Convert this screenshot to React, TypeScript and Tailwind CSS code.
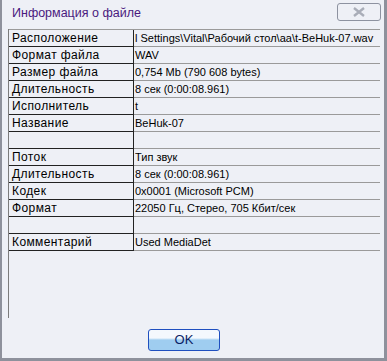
import React from "react";

type Row = { k: string; v: string };

const rows: Row[] = [
  { k: "Расположение", v: "l Settings\\Vital\\Рабочий стол\\aa\\t-BeHuk-07.wav" },
  { k: "Формат файла", v: "WAV" },
  { k: "Размер файла", v: "0,754 Mb (790 608 bytes)" },
  { k: "Длительность", v: "8 сек (0:00:08.961)" },
  { k: "Исполнитель", v: "t" },
  { k: "Название", v: "BeHuk-07" },
  { k: "", v: "" },
  { k: "Поток", v: "Тип звук" },
  { k: "Длительность", v: "8 сек (0:00:08.961)" },
  { k: "Кодек", v: "0x0001 (Microsoft PCM)" },
  { k: "Формат", v: "22050 Гц, Стерео, 705 Кбит/сек" },
  { k: "", v: "" },
  { k: "Комментарий", v: "Used MediaDet" },
];

const App = () => {
  return (
    <div
      className="relative w-[387px] h-[361px] bg-[#eef0f6] border-l-2 border-r-[3px] border-b-[3px] border-[#8e919c] overflow-hidden"
      style={{ fontFamily: '"Liberation Sans", Arial, sans-serif' }}
    >
      {/* title */}
      <div className="h-[25px] pl-[10px] pt-[5px] text-[12.5px] leading-[16px] text-[#4a1a7e]">
        Информация о файле
      </div>
      <div className="absolute right-[3px] top-[3px] w-[44px] h-[18px] border border-[#8d92a0] rounded-[3px] flex items-center justify-center">
        <svg width="14" height="10" viewBox="0 0 14 10">
          <path d="M2 1 L12 9 M12 1 L2 9" stroke="#a9adb8" strokeWidth="2.4" fill="none" />
        </svg>
      </div>

      {/* table area */}
      <div className="ml-[6px] mt-[4px] h-[289px] w-[372px] border-l border-[#7c7c7c]">
        <div className="border-t border-[#9a9a9a]">
          {rows.map((r, i) => (
            <div key={i} className="flex h-[17px] leading-[16px] text-black">
              <div className="w-[125px] border-r border-b border-[#222] pl-[3px] overflow-hidden whitespace-nowrap text-[12px] tracking-[0.4px]">
                {r.k}
              </div>
              <div className="flex-1 border-b border-[#9a9a9a] pl-[1px] overflow-hidden whitespace-nowrap text-[11px]">
                {r.v}
              </div>
            </div>
          ))}
        </div>
      </div>

      {/* button */}
      <div className="mt-[11px] ml-[146px] w-[72px] h-[22px] rounded-[3px] border border-[#1f4fbf] bg-gradient-to-b from-[#f4f8fd] from-40% to-[#9fcdf0] to-50% flex items-center justify-center text-[13px] text-[#0b1e66]">
        OK
      </div>
    </div>
  );
};

export default App;
